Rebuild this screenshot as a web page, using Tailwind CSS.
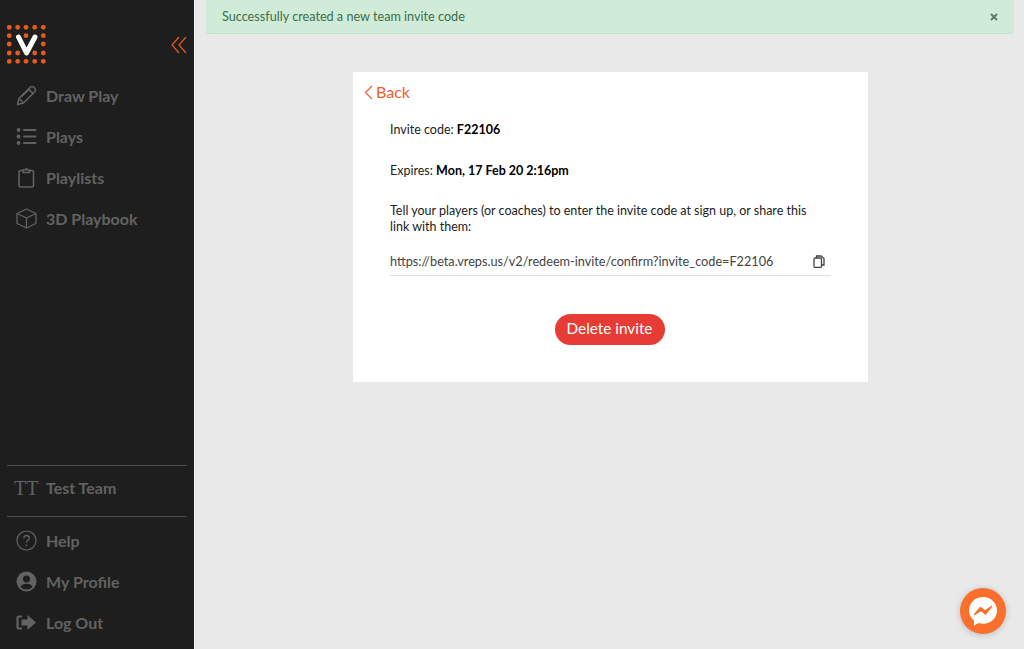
<!DOCTYPE html>
<html lang="en">
<head>
  <meta charset="UTF-8" />
  <title>Team invite</title>
  <script src="https://cdn.jsdelivr.net/npm/@tailwindcss/browser@4"></script>
</head>
<body class="h-[649px] w-[1024px] overflow-hidden bg-[#e9e9e9] font-['Lato','Liberation_Sans',sans-serif]">
  <div class="flex h-[649px]">
    <!-- sidebar -->
    <aside class="flex h-full w-[194px] shrink-0 flex-col bg-[#1e1e1e] text-[#626262]">
      <div class="flex h-[75px] items-end justify-between pl-[7px] pr-[7px] pb-[11px]">
        <svg width="39" height="39" viewBox="0 0 39 39">
          <g fill="#e8591f">
            <circle cx="2.300" cy="2.300" r="2.400"/><circle cx="10.700" cy="2.300" r="2.400"/><circle cx="19" cy="2.300" r="2.400"/><circle cx="27.700" cy="2.300" r="2.400"/><circle cx="36.300" cy="2.300" r="2.400"/>
            <circle cx="2.300" cy="10.700" r="2.400"/><circle cx="19" cy="10.700" r="2.400"/><circle cx="36.300" cy="10.700" r="2.400"/>
            <circle cx="2.300" cy="19" r="2.400"/><circle cx="36.300" cy="19" r="2.400"/>
            <circle cx="2.300" cy="28" r="2.400"/><circle cx="10.700" cy="28" r="2.400"/><circle cx="27.700" cy="28" r="2.400"/><circle cx="36.300" cy="28" r="2.400"/>
            <circle cx="2.300" cy="36.300" r="2.400"/><circle cx="10.700" cy="36.300" r="2.400"/><circle cx="19" cy="36.300" r="2.400"/><circle cx="27.700" cy="36.300" r="2.400"/><circle cx="36.300" cy="36.300" r="2.400"/>
          </g>
          <path d="M11.500 12 L19.500 28 L28 12" fill="none" stroke="#fff" stroke-width="5" stroke-linejoin="round" stroke-linecap="round"/>
        </svg>
        <svg class="mb-[10px]" width="16" height="18" viewBox="0 0 16 18" fill="none" stroke="#e8591f" stroke-width="1.200">
          <path d="M8 1 L1 9 L8 17"/><path d="M15 1 L8 9 L15 17"/>
        </svg>
      </div>
      <nav class="flex flex-col">
        <a class="flex h-[41px] items-center gap-[9px] pl-[16px] text-[16px] font-bold">
          <svg width="21" height="21" viewBox="0 0 21 21" fill="none" stroke="#626262" stroke-width="1.600" stroke-linejoin="round"><path d="M1.500 19.500 L3 13.500 L14.500 2 Q16 1 17.500 2 L19 3.500 Q20 5 19 6.500 L7.500 18 Z"/><path d="M12.500 4 L17 8.500"/><path d="M3 13.500 L7.500 18"/><path d="M5.500 11.500 L14 3.500"/></svg>
          Draw Play
        </a>
        <a class="flex h-[41px] items-center gap-[9px] pl-[16px] text-[16px] font-bold">
          <svg width="21" height="21" viewBox="0 0 21 21" fill="#626262"><circle cx="2.500" cy="4" r="1.900"/><circle cx="2.500" cy="10.500" r="1.900"/><circle cx="2.500" cy="17" r="1.900"/><rect x="7" y="3" width="13.500" height="2" rx="1"/><rect x="7" y="9.500" width="13.500" height="2" rx="1"/><rect x="7" y="16" width="13.500" height="2" rx="1"/></svg>
          Plays
        </a>
        <a class="flex h-[41px] items-center gap-[9px] pl-[16px] text-[16px] font-bold">
          <svg width="21" height="21" viewBox="0 0 21 21" fill="none" stroke="#626262" stroke-width="1.600" stroke-linejoin="round"><path d="M7 3.500 H4.500 Q3 3.500 3 5 V18.500 Q3 20 4.500 20 H16 Q17.500 20 17.500 18.500 V5 Q17.500 3.500 16 3.500 H13.500"/><path d="M7 5.500 V3 H9 Q10.200 .8 11.500 3 H13.500 V5.500 Z"/></svg>
          Playlists
        </a>
        <a class="flex h-[41px] items-center gap-[9px] pl-[16px] text-[16px] font-bold">
          <svg width="21" height="21" viewBox="0 0 21 21" fill="none" stroke="#626262" stroke-width="1.300" stroke-linejoin="round"><path d="M10.500 1 L20 5.500 V15.500 L10.500 20 L1 15.500 V5.500 Z"/><path d="M1 5.500 L10.500 10 L20 5.500"/><path d="M10.500 10 V20"/></svg>
          3D Playbook
        </a>
      </nav>
      <div class="mt-auto flex flex-col px-[7px]">
        <div class="flex h-[52px] items-center gap-[8px] border-y border-[#4d4d4d] pl-[7px] pb-[6px] text-[16px] font-bold">
          <span class="w-[24px] font-['Liberation_Serif',serif] text-[20px] font-normal">TT</span>
          Test Team
        </div>
      </div>
      <nav class="flex flex-col pt-[3px] pb-[6px]">
        <a class="flex h-[41px] items-center gap-[9px] pl-[16px] text-[16px] font-bold">
          <svg width="21" height="21" viewBox="0 0 21 21" fill="none" stroke="#626262" stroke-width="1.200"><circle cx="10.500" cy="10.500" r="9.500"/><path d="M7.800 8.200 Q8 5.500 10.500 5.500 Q13.200 5.500 13.200 8 Q13.200 9.500 11.500 10.500 Q10.500 11.200 10.500 12.800" stroke-width="1.400"/><circle cx="10.500" cy="15.300" r=".9" fill="#626262" stroke="none"/></svg>
          Help
        </a>
        <a class="flex h-[41px] items-center gap-[9px] pl-[16px] text-[16px] font-bold">
          <svg width="21" height="21" viewBox="0 0 21 21"><circle cx="10.500" cy="10.500" r="10" fill="#626262"/><circle cx="10.500" cy="8" r="3.500" fill="#1e1e1e"/><path d="M4.500 16 Q6 12.800 10.500 12.800 Q15 12.800 16.500 16 Q14 18.500 10.500 18.500 Q7 18.500 4.500 16 Z" fill="#1e1e1e"/></svg>
          My Profile
        </a>
        <a class="flex h-[41px] items-center gap-[9px] pl-[16px] text-[16px] font-bold">
          <svg width="21" height="21" viewBox="0 0 21 21" fill="none"><path d="M6 4.500 H3 Q1.500 4.500 1.500 6 V15 Q1.500 16.500 3 16.500 H6" stroke="#626262" stroke-width="2.200"/><path d="M5.500 7.500 H11.500 V3 L20 10.500 L11.500 18 V13.500 H5.500 Z" fill="#626262"/></svg>
          Log Out
        </a>
      </nav>
    </aside>
    <div class="w-px bg-[#f2f2f2]"></div>

    <!-- main -->
    <main class="relative flex-1">
      <div class="ml-[11px] mr-[10px] flex h-[34px] items-center justify-between rounded-b-[4px] border-b border-[#c4e4cd] bg-[#d0ebd7] pl-[16px] pr-[16px] text-[12.65px] text-[#3c6e4c]">
        <span class="pt-[1px]">Successfully created a new team invite code</span>
        <svg width="8" height="8" viewBox="0 0 8 8" stroke="#66776c" stroke-width="2"><path d="M1 1 L7 7 M7 1 L1 7"/></svg>
      </div>

      <section class="ml-[158px] mt-[38px] h-[310px] w-[515px] bg-white">
        <a class="flex items-center gap-[3px] pl-[11px] pt-[10px] text-[16px] leading-[20px] text-[#ef5d2a]">
          <svg width="9" height="15" viewBox="0 0 9 15" fill="none" stroke="#ef5d2a" stroke-width="1.200"><path d="M8 1 L1.500 7.500 L8 14"/></svg>
          Back
        </a>
        <div class="mx-[37px] text-[12.5px] leading-[16px] text-[#222]">
          <p class="mt-[20px]">Invite code: <b class="text-black">F22106</b></p>
          <p class="mt-[25px]">Expires: <b class="text-black">Mon, 17 Feb 20 2:16pm</b></p>
          <p class="mt-[24px]">Tell your players (or coaches) to enter the invite code at sign up, or share this<br>link with them:</p>
          <div class="mt-[8px] flex h-[33px] items-center justify-between border-b border-[#d9dfdf] pt-[4px] text-[12.7px] text-[#444]">
            <span>https://beta.vreps.us/v2/redeem-invite/confirm?invite_code=F22106</span>
            <svg class="mr-[6px]" width="12" height="13" viewBox="0 0 12 13" fill="none" stroke="#444" stroke-width="1.300"><rect x="1" y="3" width="7.500" height="9.500" rx="1.200"/><path d="M3.500 3 V1 H8 L11 3.500 V10 H8.500"/></svg>
          </div>
          <div class="mt-[38px] flex justify-center pr-[2px]">
            <button class="h-[31px] w-[110px] rounded-full bg-[#e63c35] pb-[4px] text-[15.3px] text-white">Delete invite</button>
          </div>
        </div>
      </section>

      <div class="absolute right-[18px] bottom-[15px] flex h-[46px] w-[46px] items-center justify-center rounded-full bg-[#f96f2b] shadow-[0_1px_6px_rgba(0,0,0,0.2)]">
        <svg width="32" height="32" viewBox="0 0 32 32"><path d="M16 2 C8 2 2 8 2 15.500 C2 19.700 3.900 23.200 7 25.600 V30.500 L11.500 28 C13 28.500 14.400 28.800 16 28.800 C24 28.800 30 23 30 15.500 C30 8 24 2 16 2 Z" fill="#fff"/><path d="M7.500 19.500 L13.500 12.500 L18 16 L24.500 11.500 L18.500 19 L14 15.500 Z" fill="#f96f2b" stroke="#f96f2b" stroke-width="1.400" stroke-linejoin="round"/></svg>
      </div>
    </main>
  </div>
</body>
</html>
